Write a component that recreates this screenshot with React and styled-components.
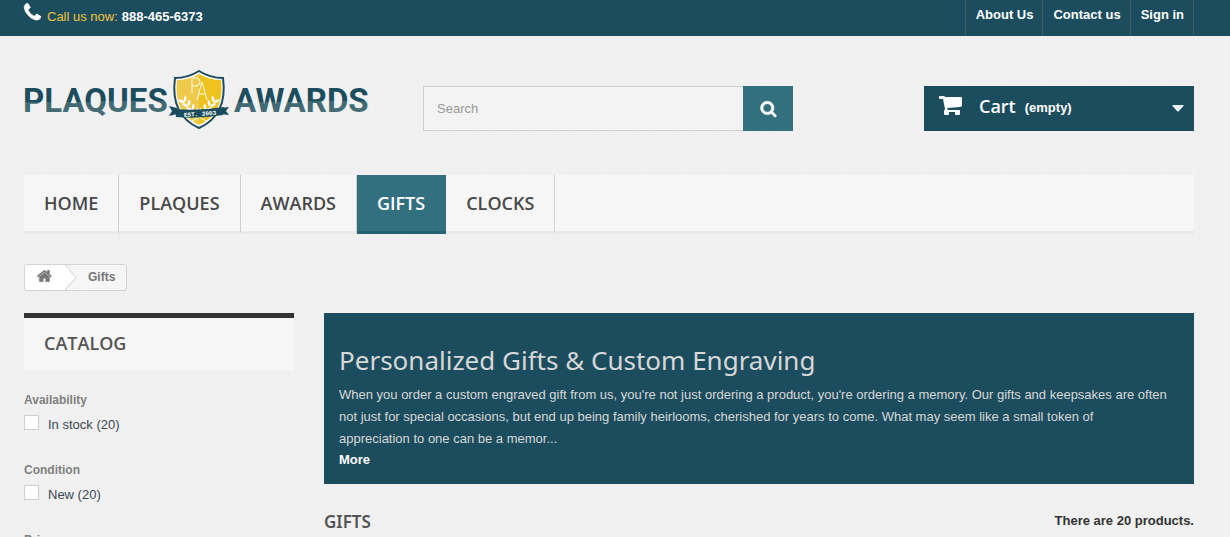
import React from "react";
import styled, { createGlobalStyle } from "styled-components";

const sans = '"Liberation Sans", Arial, sans-serif';
const display = '"Open Sans", sans-serif';
const rounded = '"Noto Sans", sans-serif';
const navy = "#1c4d5e";
const teal = "#33707f";

const GlobalStyle = createGlobalStyle`
  *, *::before, *::after { box-sizing: border-box; }
  body {
    margin: 0;
    font: 13px/18px ${sans};
    color: #777;
    background: repeating-linear-gradient(90deg, #f1f1f1 0 3px, #f0f0f0 3px 5px, #f1f1f1 5px 8px, #efefef 8px 10px);
  }
  a { color: inherit; text-decoration: none; }
  h1, h2, h3, p { margin: 0; padding: 0; }
  svg { display: block; }
`;

const Page = styled.div`
  height: 100vh;
  overflow: hidden;
`;

const Container = styled.div`
  padding: 0 36px 0 24px;
`;

const TopBar = styled.div`
  background: ${navy};
  color: #fff;
  font-weight: bold;
`;

const TopInner = styled(Container)`
  display: flex;
  justify-content: space-between;
  height: 36px;
`;

const Phone = styled.p`
  display: flex;
  gap: 4px;
  padding-top: 8px;

  svg { margin: -6px 0 0 -2px; }
  span { color: #f2c438; font-weight: normal; }
`;

const TopLinks = styled.nav`
  display: flex;
  border-right: 1px solid #3c5d62;

  a {
    border-left: 1px solid #3c5d62;
    padding: 6px 9px 0 10px;
  }
`;

const Header = styled.header`
  display: flex;
  align-items: flex-start;
  gap: 30px;
  padding: 50px 0 44px;
`;

const Logo = styled.a`
  flex: 0 0 369px;
  margin-top: -17px;
  height: 62px;
`;

const SearchForm = styled.form`
  display: flex;
  flex: 0 1 370px;
  height: 45px;
`;

const SearchInput = styled.input`
  flex: 1;
  min-width: 0;
  border: 1px solid #cfcfcf;
  border-right: 0;
  border-radius: 0;
  background: #f3f3f3;
  padding: 0 13px;
  font: 13px/18px ${sans};
  color: #777;

  &::placeholder { color: #999; opacity: 1; }
`;

const SearchButton = styled.button`
  display: flex;
  align-items: center;
  justify-content: center;
  width: 50px;
  border: 0;
  padding: 0;
  background: ${teal};
  color: #fff;
`;

const Cart = styled.a`
  display: flex;
  align-items: center;
  flex: 0 0 270px;
  height: 45px;
  margin-left: auto;
  padding: 0 10px 6px 15px;
  background: ${navy};
  color: #fff;
  font-weight: bold;

  strong { font: 600 18px/24px ${display}; margin: 0 9px 0 17px; }
  span { padding-top: 4px; }
  svg:last-child { margin: 5px 0 0 auto; }
`;

const Menu = styled.nav`
  display: flex;
  height: 59px;
  background: #f6f6f6;
  border-bottom: 3px solid #e9e9e9;
`;

const MenuLink = styled.a`
  height: 59px;
  padding: 16px 20px 0;
  font: 600 18px/24px ${display};
  text-transform: uppercase;
  color: ${(p) => (p.$active ? "#fff" : "#484848")};
  background: ${(p) => (p.$active ? teal : "transparent")};
  border-right: 1px solid ${(p) => (p.$active ? teal : "#d0d0d0")};
  border-bottom: 3px solid ${(p) => (p.$active ? "#226474" : "#e9e9e9")};
`;

const Breadcrumb = styled.nav`
  display: inline-flex;
  height: 27px;
  margin: 30px 0 22px;
  border: 1px solid #d3d3d3;
  border-radius: 3px;
  overflow: hidden;
  background: #f6f6f6;
  font-size: 12px;
  line-height: 24px;
  font-weight: bold;

  > span { padding: 0 11px 0 10px; }
`;

const HomeCrumb = styled.a`
  display: flex;
  background: linear-gradient(90deg, #fff 0 40px, transparent 40px);
  padding-left: 12px;

  svg:first-child { margin: 3px 12px 0 0; }
`;

const Columns = styled.div`
  display: grid;
  grid-template-columns: 270px minmax(0, 1fr);
  gap: 30px;
  align-items: start;
`;

const BlockTitle = styled.h2`
  border-top: 5px solid #333;
  background: #f6f6f6;
  padding: 13px 20px 16px;
  font: 600 18px/24px ${display};
  color: #555454;
  margin-bottom: 19px;
`;

const Filter = styled.section`
  height: 70px;

  h3 { font-size: 12px; line-height: 20px; font-weight: bold; color: #808080; }
  label {
    display: flex;
    align-items: center;
    gap: 9px;
    height: 30px;
    color: #3a4754;
  }
`;

const Checkbox = styled.input.attrs({ type: "checkbox" })`
  appearance: none;
  width: 15px;
  height: 15px;
  margin: -5px 0 0;
  border: 1px solid #cfcfcf;
  background: #fff;
`;

const Banner = styled.section`
  background: ${navy};
  color: #d7d7d7;
  padding: 30px 15px 14px;
  line-height: 22px;

  h1 {
    font: 400 26px/34px ${rounded};
    margin-bottom: 7px;
  }
  a { display: block; color: #fff; font-weight: bold; line-height: 20px; }
`;

const ListHeading = styled.div`
  display: flex;
  justify-content: space-between;
  margin-top: 25px;
  color: #333;
  font-weight: bold;
  line-height: 24px;

  h2 { font: 600 17px/26px ${rounded}; color: #555454; }
`;

const iconPaths = {
  phone: "M1600 1240q0 27-10 70.5t-21 68.5q-21 50-122 106-94 51-186 51-27 0-53-3.5t-57.5-12.5-47-14.5-55.5-20.5-49-18q-98-35-175-83-127-79-264-216t-216-264q-48-77-83-175-3-9-18-49t-20.5-55.5-14.5-47-12.5-57.5-3.5-53q0-92 51-186 56-101 106-122 25-11 68.5-21t70.5-10q14 0 21 3 18 6 53 76 11 19 30 54t35 63.5 31 53.5q3 4 17.5 25t21.5 35.5 7 28.5q0 20-28.5 50t-62 55-62 53-28.5 46q0 9 5 22.5t8.5 20.5 14 24 11.5 19q76 137 174 235t235 174q2 1 19 11.5t24 14 20.5 8.5 22.5 5q18 0 46-28.5t53-62 55-62 50-28.5q14 0 28.5 7t35.5 21.5 25 17.5q25 15 53.5 31t63.5 35 54 30q70 35 76 53 3 7 3 21z",
  search: "M1216 832q0-185-131.5-316.5t-316.5-131.5-316.5 131.5-131.5 316.5 131.5 316.5 316.5 131.5 316.5-131.5 131.5-316.5zm512 832q0 52-38 90t-90 38q-54 0-90-38l-343-342q-179 124-399 124-143 0-273.5-55.5t-225-150-150-225-55.5-273.5 55.5-273.5 150-225 225-150 273.5-55.5 273.5 55.5 225 150 150 225 55.5 273.5q0 220-124 399l343 343q37 37 37 90z",
  home: "M1408 992v480q0 26-19 45t-45 19h-384v-384h-256v384h-384q-26 0-45-19t-19-45v-480q0-1 .5-3t.5-3l575-474 575 474q1 2 1 6zm223-69l-62 74q-8 9-21 11h-3q-13 0-21-7l-692-577-692 577q-12 8-24 7-13-2-21-11l-62-74q-8-10-7-23.5t11-21.5l719-599q32-26 76-26t76 26l244 204v-195q0-14 9-23t23-9h192q14 0 23 9t9 23v408l219 182q10 8 11 21.5t-7 23.5z",
};

const Icon = ({ name, size, weight = 0 }) => (
  <svg
    width={size}
    height={size}
    viewBox="0 0 1792 1792"
    fill="currentColor"
    stroke="currentColor"
    strokeWidth={weight}
    overflow="visible"
    aria-hidden="true"
  >
    <path d={iconPaths[name]} />
  </svg>
);

const CartIcon = () => (
  <svg width="23" height="20" viewBox="0 0 23 20" fill="#fff" aria-hidden="true">
    <path d="M1 0h4q1 0 1 1h16q1 0 1 1v7q0 2-2 2L8 12l1 2h11q1 0 1 1v3q0 1-1 1h-3q-1 0-1-1v-2h-6v2q0 1-1 1H6q-1 0-1-1v-3l1-2L4 3H1Q0 3 0 2V1Q0 0 1 0z" />
  </svg>
);

const Caret = () => (
  <svg width="12" height="7" viewBox="0 0 12 7" fill="#eef3f6" aria-hidden="true">
    <path d="M1 0h10q1 0 .5 1L7 6q-1 1-2 0L.5 1Q0 0 1 0z" />
  </svg>
);

const CrumbArrow = () => (
  <svg width="13" height="25" viewBox="0 0 13 25" aria-hidden="true">
    <path d="M0 0L11 12.5L0 25z" fill="#fff" />
    <path d="M0 0L11 12.5L0 25" fill="none" stroke="#cfcfcf" />
  </svg>
);

const Leaves = () => (
  <g>
    <path d="M158 31Q163 42 182 52" fill="none" stroke="#fff" />
    {[0, 1, 2, 3].map((i) => (
      <g key={i} transform={`translate(${i * 4} ${i * 4})`} fill="#fff">
        <ellipse cx="157" cy="32" rx="3" ry="1.3" transform="rotate(25 157 32)" />
        <ellipse cx="161" cy="30" rx="1.3" ry="3" transform="rotate(10 161 30)" />
      </g>
    ))}
  </g>
);

const LogoArt = () => (
  <svg width="354" height="62" viewBox="0 0 354 62" role="img" aria-label="Plaques Awards">
    <defs>
      <linearGradient id="word" x1="0" y1="0" x2="0.05" y2="1">
        <stop offset="0.55" stopColor="#1c4d5e" />
        <stop offset="0.55" stopColor="#3d6771" />
        <stop offset="1" stopColor="#4a727b" />
      </linearGradient>
    </defs>
    <g fill="url(#word)" fontFamily="Roboto, sans-serif" fontWeight="700" fontSize="33">
      <text x="-1" y="43">PLAQUES</text>
      <text x="210" y="43">AWARDS</text>
    </g>
    <path d="M175 2Q186 9 199 9Q204 46 175 59Q146 46 151 9Q164 9 175 2z" fill="#fff" stroke="#1c4d5e" strokeWidth="2" />
    <path d="M175 5Q186 11 197 11Q201 44 175 56z" fill="#efc31f" />
    <path d="M175 5Q164 11 153 11Q149 44 175 56z" fill="#edca4c" />
    <path d="M168 24V9h4q4 0 4 4t-4 4h-4M173 31l5-18 5 18M175 25h7" fill="none" stroke="#fffbe8" />
    <Leaves />
    <g transform="translate(350 0) scale(-1 1)"><Leaves /></g>
    <path d="M145 37l8 2v6l-8 2 3-5zM205 38l-9 1v6l9 1-3-4z" fill="#1c4d5e" />
    <path d="M151 40Q175 42 200 38l-1 8Q175 50 152 48z" fill="#1c4d5e" />
    <text x="176" y="47" fill="#fff" fontFamily='"Liberation Mono", monospace' fontWeight="bold" fontSize="6" textAnchor="middle" transform="rotate(-4 175 45)">EST. 2003</text>
  </svg>
);

const menu = ["Home", "Plaques", "Awards", "Gifts", "Clocks"];

export default function App() {
  return (
    <Page>
      <GlobalStyle />
      <TopBar>
        <TopInner>
          <Phone>
            <Icon name="phone" size={21} weight={60} />
            <span>Call us now:</span> 888-465-6373
          </Phone>
          <TopLinks>
            <a href="#about">About Us</a>
            <a href="#contact">Contact us</a>
            <a href="#signin">Sign in</a>
          </TopLinks>
        </TopInner>
      </TopBar>
      <Container>
        <Header>
          <Logo href="#home"><LogoArt /></Logo>
          <SearchForm role="search">
            <SearchInput type="text" placeholder="Search" aria-label="Search" />
            <SearchButton type="button" aria-label="Submit search">
              <Icon name="search" size={17} weight={60} />
            </SearchButton>
          </SearchForm>
          <Cart href="#cart">
            <CartIcon />
            <strong>Cart</strong>
            <span>(empty)</span>
            <Caret />
          </Cart>
        </Header>
        <Menu>
          {menu.map((m) => (
            <MenuLink key={m} href={`#${m}`} $active={m === "Gifts"}>{m}</MenuLink>
          ))}
        </Menu>
        <Breadcrumb aria-label="Breadcrumb">
          <HomeCrumb href="#home" aria-label="Home">
            <Icon name="home" size={16} weight={40} />
            <CrumbArrow />
          </HomeCrumb>
          <span>Gifts</span>
        </Breadcrumb>
        <Columns>
          <aside>
            <BlockTitle>CATALOG</BlockTitle>
            <Filter>
              <h3>Availability</h3>
              <label><Checkbox /> In stock (20)</label>
            </Filter>
            <Filter>
              <h3>Condition</h3>
              <label><Checkbox /> New (20)</label>
            </Filter>
            <Filter>
              <h3>Price</h3>
            </Filter>
          </aside>
          <main>
            <Banner>
              <h1>Personalized Gifts &amp; Custom Engraving</h1>
              <p>
                When you order a custom engraved gift from us, you're not just ordering a product, you're ordering a
                memory. Our gifts and keepsakes are often not just for special occasions, but end up being family
                heirlooms, cherished for years to come. What may seem like a small token of<br />
                appreciation to one can be a memor...
              </p>
              <a href="#more">More</a>
            </Banner>
            <ListHeading>
              <h2>GIFTS</h2>
              <span>There are 20 products.</span>
            </ListHeading>
          </main>
        </Columns>
      </Container>
    </Page>
  );
}
